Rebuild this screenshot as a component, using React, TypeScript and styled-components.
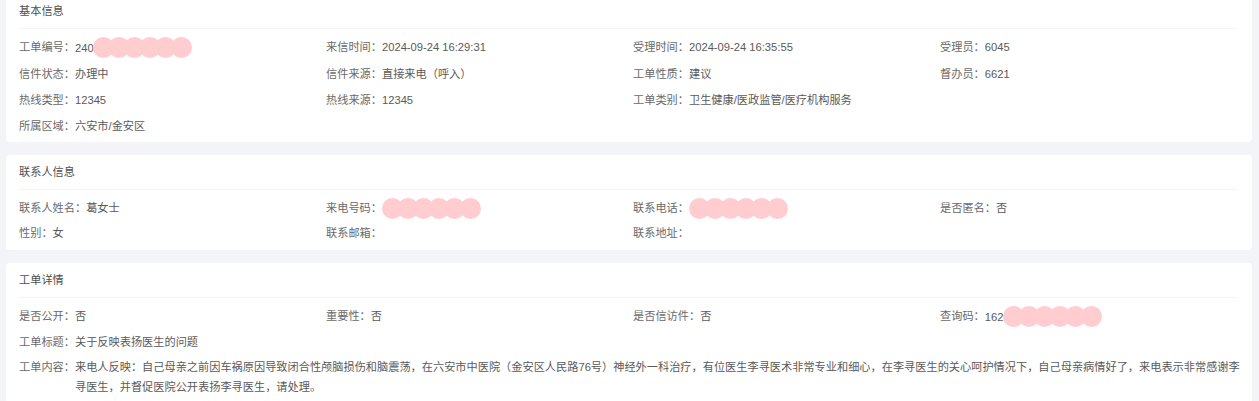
import React from 'react';
import styled, { createGlobalStyle } from 'styled-components';

const GlobalStyle = createGlobalStyle`
  html, body {
    margin: 0;
    padding: 0;
    background: #f3f4f7;
    overflow: hidden;
  }
  body {
    font-family: 'Liberation Sans', 'Noto Sans CJK SC', sans-serif;
    font-size: 11.2px;
    color: #606266;
  }
`;

const Page = styled.div`
  display: flex;
  flex-direction: column;
  gap: 13px;
  margin-top: -6px;
  padding: 0 7px 0 6px;
`;

const Card = styled.section<{ $pb?: number }>`
  background: #fff;
  border-radius: 4px;
  padding: 0 6px ${p => p.$pb ?? 6}px 13px;
`;

const CardHeader = styled.div`
  height: 34px;
  line-height: 34px;
  margin-right: 9px;
  border-bottom: 1px solid #f2f3f5;
  color: #505050;
`;

const Grid = styled.div<{ $gap: number }>`
  display: grid;
  grid-template-columns: repeat(4, 307px);
  row-gap: ${p => p.$gap}px;
  padding-top: 8px;
`;

const Field = styled.div<{ $full?: boolean }>`
  display: flex;
  align-items: flex-start;
  line-height: 20px;
  min-height: 20px;
  white-space: nowrap;
  ${p => p.$full && 'grid-column: 1 / -1; white-space: normal;'}
`;

const Label = styled.span`
  flex: none;
  color: #6a6a6a;
  &::after {
    content: '：';
  }
`;

const Value = styled.span`
  color: #5a5a5a;
  display: inline-flex;
  align-items: center;
`;

const Text = styled.span`
  color: #5a5a5a;
  flex: 1;
  min-width: 0;
  line-height: 20px;
`;

const Blob = styled.svg<{ $shift?: number }>`
  display: block;
  margin-left: ${p => p.$shift ?? 0}px;
  flex: none;
`;

const Redacted: React.FC<{ shift?: number }> = ({ shift }) => (
  <Blob $shift={shift} width="99" height="21" viewBox="0 0 99 21">
    {[10.5, 26, 41.5, 57, 72.5, 88.5].map(cx => (
      <circle key={cx} cx={cx} cy="10.5" r="10.5" fill="#ffcdcf" />
    ))}
  </Blob>
);

const Item: React.FC<{ label: string; children?: React.ReactNode }> = ({ label, children }) => (
  <Field>
    <Label>{label}</Label>
    <Value>{children}</Value>
  </Field>
);

const Empty = styled.div``;

export default function App() {
  return (
    <>
      <GlobalStyle />
      <Page>
        <Card>
          <CardHeader>基本信息</CardHeader>
          <Grid $gap={6}>
            <Item label="工单编号">
              2409
              <Redacted shift={-7} />
            </Item>
            <Item label="来信时间">2024-09-24 16:29:31</Item>
            <Item label="受理时间">2024-09-24 16:35:55</Item>
            <Item label="受理员">6045</Item>
            <Item label="信件状态">办理中</Item>
            <Item label="信件来源">直接来电（呼入）</Item>
            <Item label="工单性质">建议</Item>
            <Item label="督办员">6621</Item>
            <Item label="热线类型">12345</Item>
            <Item label="热线来源">12345</Item>
            <Item label="工单类别">卫生健康/医政监管/医疗机构服务</Item>
            <Empty />
            <Item label="所属区域">六安市/金安区</Item>
          </Grid>
        </Card>

        <Card $pb={7}>
          <CardHeader>联系人信息</CardHeader>
          <Grid $gap={4}>
            <Item label="联系人姓名">葛女士</Item>
            <Item label="来电号码">
              <Redacted />
            </Item>
            <Item label="联系电话">
              <Redacted />
            </Item>
            <Item label="是否匿名">否</Item>
            <Item label="性别">女</Item>
            <Item label="联系邮箱" />
            <Item label="联系地址" />
            <Empty />
          </Grid>
        </Card>

        <Card>
          <CardHeader>工单详情</CardHeader>
          <Grid $gap={5}>
            <Item label="是否公开">否</Item>
            <Item label="重要性">否</Item>
            <Item label="是否信访件">否</Item>
            <Item label="查询码">
              1624
              <Redacted shift={-7} />
            </Item>
            <Field $full>
              <Label>工单标题</Label>
              <Text>关于反映表扬医生的问题</Text>
            </Field>
            <Field $full>
              <Label>工单内容</Label>
              <Text>
                来电人反映：自己母亲之前因车祸原因导致闭合性颅脑损伤和脑震荡，在六安市中医院（金安区人民路76号）神经外一科治疗，有位医生李寻医术非常专业和细心，在李寻医生的关心呵护情况下，自己母亲病情好了，来电表示非常感谢李寻医生，并督促医院公开表扬李寻医生，请处理。
              </Text>
            </Field>
          </Grid>
        </Card>
      </Page>
    </>
  );
}
